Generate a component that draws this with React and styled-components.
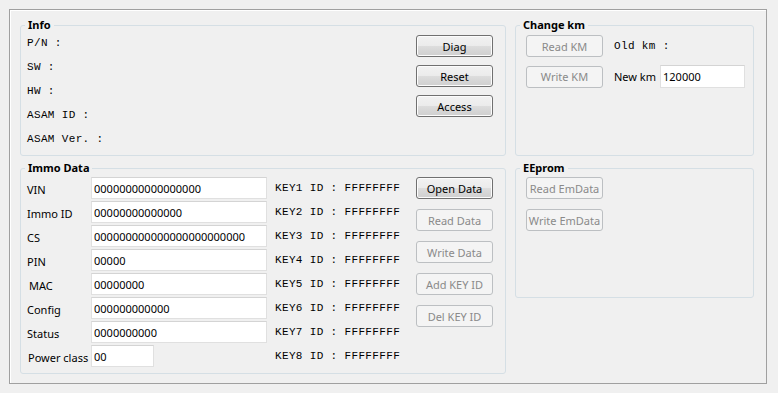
import React from "react"
import styled, { createGlobalStyle } from "styled-components"

const GlobalStyle = createGlobalStyle`
  html, body {
    margin: 0;
    padding: 0;
    background: #f0f0f0;
  }
  body {
    font-family: "Noto Sans", "Open Sans", sans-serif;
    font-size: 11px;
    color: #000;
  }
`

const Window = styled.div`
  box-sizing: border-box;
  width: 758px;
  height: 375px;
  margin: 9px;
  border: 1px solid #a0a0a0;
  box-shadow: inset 1px 1px 0 #fff;
  display: grid;
  grid-template-columns: 486px 239px;
  grid-template-rows: 138px 213px;
  column-gap: 9px;
  row-gap: 5px;
  align-items: start;
  padding: 8px 0 0 10px;
`

const Group = styled.fieldset`
  box-sizing: border-box;
  margin: 0;
  min-width: 0;
  height: ${p => p.h}px;
  padding: 0 ${p => p.pr || 0}px 0 ${p => p.pl}px;
  border: 1px solid #d5dfe5;
  border-radius: 3px;
`

const Title = styled.legend`
  margin-left: ${p => -2 - (p.pl - 6)}px;
  padding: 0 3px;
  font-weight: 700;
  font-size: 11px;
  line-height: 14px;
`

const InfoBody = styled.div`
  display: flex;
  justify-content: space-between;
`

const Mono = styled.div`
  font-family: "Liberation Mono", "Courier New", monospace;
  font-size: 11px;
  letter-spacing: 0.35px;
  line-height: 24px;
  white-space: pre;
`

const MonoList = styled.div`
  display: flex;
  flex-direction: column;
  margin-top: ${p => p.mt || 0}px;
  margin-left: ${p => p.ml || 0}px;
  width: ${p => p.w || "auto"};
`

const Stack = styled.div`
  display: flex;
  flex-direction: column;
  gap: ${p => p.gap}px;
  margin-top: ${p => p.mt}px;
`

const Button = styled.button`
  box-sizing: border-box;
  width: 77px;
  height: 22px;
  padding: 0;
  font-family: "Noto Sans", "Open Sans", sans-serif;
  font-size: 11px;
  white-space: nowrap;
  border-radius: 3px;
  border: 1px solid #707070;
  color: #000;
  background: linear-gradient(#f2f2f2 0%, #ebebeb 50%, #dddddd 50%, #cfcfcf 100%);
  box-shadow: inset 0 0 0 1px #fcfcfc;

  &:disabled {
    border-color: #bcbfc2;
    background: #f4f4f4;
    box-shadow: none;
    color: #8a8a8a;
  }
`

const KmRow = styled.div`
  display: flex;
  align-items: center;
  margin-top: ${p => p.mt}px;
`

const KmLabel = styled.span`
  margin-left: 11px;
  margin-right: 4px;
  font-family: ${p => (p.mono ? `"Liberation Mono", "Courier New", monospace` : "inherit")};
  letter-spacing: ${p => (p.mono ? "0.35px" : "normal")};
`

const Field = styled.input`
  box-sizing: border-box;
  width: ${p => p.w}px;
  height: ${p => p.hgt || 22}px;
  padding: 0 2px;
  margin: 0;
  border: 1px solid #e0e0e0;
  border-top-color: #d4d4d4;
  background: #fff;
  font-family: "Noto Sans", "Open Sans", sans-serif;
  font-size: 11px;
  color: #000;
  outline: none;
`

const ImmoBody = styled.div`
  display: flex;
  margin-top: 1px;
`

const FieldGrid = styled.div`
  display: grid;
  grid-template-columns: 64px 176px;
  grid-auto-rows: 24px;
  align-items: center;
`

const FieldLabel = styled.label`
  padding-left: ${p => p.shift || 0}px;
  padding-top: 2px;
  white-space: nowrap;
`

const immoFields = [
  ["VIN", "00000000000000000", 0],
  ["Immo ID", "00000000000000", 0],
  ["CS", "000000000000000000000000", 0],
  ["PIN", "00000", 0],
  ["MAC", "00000000", 2],
  ["Config", "000000000000", -2],
  ["Status", "0000000000", -1],
]

const infoLabels = ["P/N :", "SW :", "HW :", "ASAM ID :", "ASAM Ver. :"]

export default function App() {
  return (
    <>
      <GlobalStyle />
      <Window>
        <Group h={138} pl={6} pr={12}>
          <Title pl={6}>Info</Title>
          <InfoBody>
            <MonoList mt={-1}>
              {infoLabels.map(l => <Mono key={l}>{l}</Mono>)}
            </MonoList>
            <Stack gap={8} mt={3}>
              <Button>Diag</Button>
              <Button>Reset</Button>
              <Button>Access</Button>
            </Stack>
          </InfoBody>
        </Group>

        <Group h={138} pl={10}>
          <Title pl={10}>Change km</Title>
          <KmRow mt={3}>
            <Button disabled>Read KM</Button>
            <KmLabel mono>Old km :</KmLabel>
          </KmRow>
          <KmRow mt={8}>
            <Button disabled>Write KM</Button>
            <KmLabel>New km</KmLabel>
            <Field w={85} hgt={23} defaultValue="120000" />
          </KmRow>
        </Group>

        <Group h={213} pl={6}>
          <Title pl={6}>Immo Data</Title>
          <ImmoBody>
            <FieldGrid>
              {immoFields.map(([label, value, shift]) => (
                <React.Fragment key={label}>
                  <FieldLabel shift={shift}>{label}</FieldLabel>
                  <Field w={176} defaultValue={value} />
                </React.Fragment>
              ))}
              <FieldLabel shift={1}>Power class</FieldLabel>
              <Field w={63} defaultValue="00" />
            </FieldGrid>
            <MonoList w="141px" ml={8}>
              {[1, 2, 3, 4, 5, 6, 7, 8].map(n => (
                <Mono key={n}>{`KEY${n} ID : FFFFFFFF`}</Mono>
              ))}
            </MonoList>
            <Stack gap={10} mt={1}>
              <Button>Open Data</Button>
              <Button disabled>Read Data</Button>
              <Button disabled>Write Data</Button>
              <Button disabled>Add KEY ID</Button>
              <Button disabled>Del KEY ID</Button>
            </Stack>
          </ImmoBody>
        </Group>

        <Group h={137} pl={10}>
          <Title pl={10}>EEprom</Title>
          <Stack gap={10} mt={2}>
            <Button disabled>Read EmData</Button>
            <Button disabled>Write EmData</Button>
          </Stack>
        </Group>
      </Window>
    </>
  )
}
